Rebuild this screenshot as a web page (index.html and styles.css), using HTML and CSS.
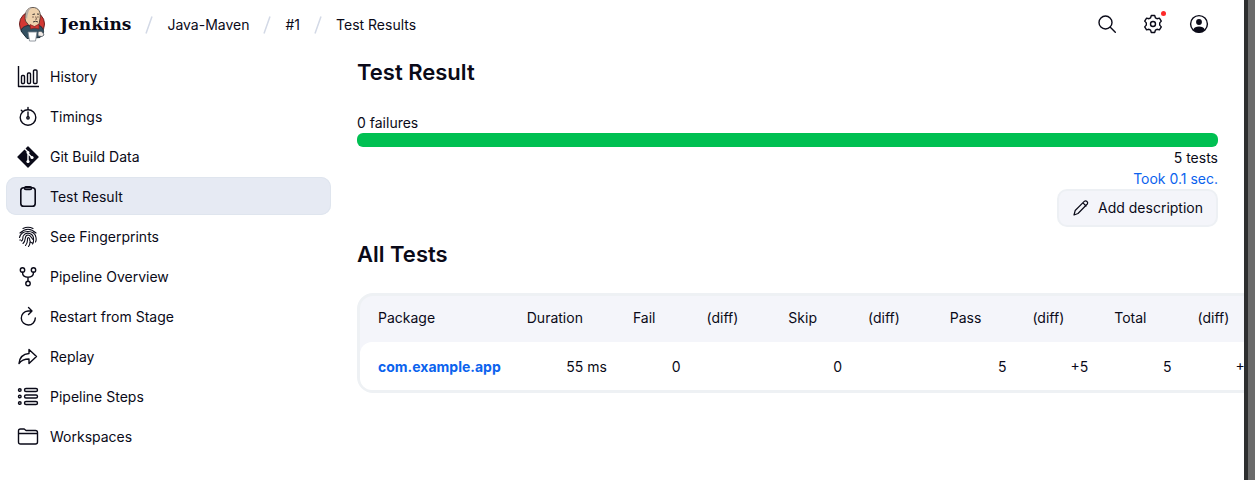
FILE: index.html
```html
<!DOCTYPE html>
<html lang="en">
<head>
<meta charset="utf-8">
<title>Test Results - Jenkins</title>
<link rel="stylesheet" href="styles.css">
</head>
<body>
<div class="page">
  <header class="header">
    <a class="brand" href="#">
      <svg class="brand-logo" viewBox="0 0 28 36" aria-hidden="true">
        <ellipse cx="14" cy="18" rx="12.500" ry="12.500" fill="#d33833" stroke="#6b2020" stroke-width="1"/>
        <path d="M7.500 15C6 8 8.500 2 14 1.500c7-.5 9 5 8 11l-1 6-4 3-6-2z" fill="#eed1ac" stroke="#3b3430" stroke-width=".8"/>
        <path d="M7.800 7C8.300 3.500 10.500 1.500 14 1.700l-3 2.500-1.500 5-.5 4-1-2z" fill="#b5aca4"/>
        <path d="M14.500 8.500l2.500-.5M19 8l2 .2M15 16q2.500-1.500 5 0" fill="none" stroke="#3b3430" stroke-width="1"/>
        <path d="M14 11h2M18.800 11h2M17.500 10.500l1.200 2.800h-1.500" stroke="#6a5145" stroke-width=".8" fill="none"/>
        <path d="M3 25c0-3 4-5 7-5.500l6 2 5-2c3 1 5 4 4.500 7l-3.500 5-13 1z" fill="#335061" stroke="#1b2c37" stroke-width="1"/>
        <path d="M12 18.500l4.500 2 4.500-2.500v5l-4.500-1-4 1z" fill="#d33833" stroke="#812020" stroke-width=".7"/>
        <path d="M10 26h9l-1.500 9h-6z" fill="#fff" stroke="#7a828a" stroke-width=".8"/>
        <path d="M20 26c2-1 4-1 5 1l1 2-2 1.500-4-.5z" fill="#f2ebe6" stroke="#45505a" stroke-width=".8"/>
      </svg>
      <span class="brand-name">Jenkins</span>
    </a>
    <nav class="crumbs" aria-label="Breadcrumb">
      <svg class="slash" viewBox="0 0 8 18" aria-hidden="true"><path d="M7 .5 1 17.500"/></svg>
      <a href="#">Java-Maven</a>
      <svg class="slash" viewBox="0 0 8 18" aria-hidden="true"><path d="M7 .5 1 17.500"/></svg>
      <a href="#">#1</a>
      <svg class="slash" viewBox="0 0 8 18" aria-hidden="true"><path d="M7 .5 1 17.500"/></svg>
      <a href="#">Test Results</a>
    </nav>
    <div class="actions">
      <button class="icon-button" type="button" aria-label="Search">
        <svg class="icon" viewBox="0 0 22 22"><circle cx="9.500" cy="9.500" r="6.500"/><path d="m14.300 14.300 5 5"/></svg>
      </button>
      <button class="icon-button" type="button" aria-label="Manage Jenkins">
        <svg class="icon" viewBox="0 0 22 22"><path d="M9.300 2.500h3.400l.7 2.300 1.600.9 2.400-.6 1.900 3-1.600 1.800v2.200l1.600 1.800-1.900 3-2.400-.6-1.600.9-.7 2.300H9.300l-.7-2.300-1.600-.9-2.400.6-1.900-3 1.600-1.800V9.900L2.700 8.100l1.900-3 2.400.6 1.600-.9z"/><circle cx="11" cy="11" r="2.500"/></svg>
        <span class="dot"></span>
      </button>
      <button class="icon-button" type="button" aria-label="User">
        <svg class="icon" viewBox="0 0 22 22"><circle cx="11" cy="11" r="8.400"/><circle class="solid" cx="11" cy="9" r="2.200"/><path class="solid" d="M6 16.500c1.500-3 8.500-3 10 0-3 3.300-7 3.300-10 0z"/></svg>
      </button>
    </div>
  </header>
  <div class="body">
    <nav class="tasks" aria-label="Tasks">
      <a class="task" href="#"><svg class="icon" viewBox="0 0 22 22"><path d="M1.500 0v20.500H22"/><rect x="4.500" y="9.500" width="3" height="8" rx="1"/><rect x="10.500" y="7" width="3" height="10.500" rx="1"/><rect x="16.500" y="4" width="3.500" height="13.500" rx="1"/></svg>History</a>
      <a class="task" href="#"><svg class="icon" viewBox="0 0 22 22"><circle cx="11" cy="11.500" r="7.800"/><path d="M11 1.500v2M4.300 4.300l1.500 1.500M11 6v5"/><circle cx="11" cy="11.800" r="1.200"/></svg>Timings</a>
      <a class="task" href="#"><svg class="icon" viewBox="0 0 22 22"><path class="solid" d="M11 1 21 11 11 21 1 11z"/><path class="knockout" d="M7.500 2.500 11 6v10M11 7.500l4 4"/><circle class="knockout-fill" cx="11" cy="6.500" r="1.500"/><circle class="knockout-fill" cx="11" cy="15.500" r="1.600"/><circle class="knockout-fill" cx="15" cy="11.500" r="1.600"/></svg>Git Build Data</a>
      <a class="task active" href="#" aria-current="page"><svg class="icon heavy" viewBox="0 0 22 22"><rect x="3.800" y="1.800" width="14.400" height="18.400" rx="2.800"/><rect x="7.500" y=".9" width="7" height="2.600" rx="1.300"/></svg>Test Result</a>
      <a class="task" href="#"><svg class="icon fine" viewBox="0 0 22 22"><path d="M6 2.500q5-2.500 10 0M3 7q8-7.500 16 0M2.500 11.500C4.500 3.500 17.500 3.500 19 11.500q.5 3-.5 4.500M4.500 15c2.500-1.500.5-3.500 2-5.500 3-4.500 10-2 10 3 0 2.500.5 3.500-1 5.500M6 17.500c4-3.500.5-8.500 5-8.500 3.500 0 3.500 4 5 4.500M8.500 19.500c3-3.500 1.500-5.500 2.200-7.500.8-1 2 0 2 1.500 0 3 1.300 3.500 3.300 3.500M11.500 20.500c1.500-2 1.500-3 1.300-4M2.800 14h1"/></svg>See Fingerprints</a>
      <a class="task" href="#"><svg class="icon" viewBox="0 0 22 22"><circle cx="5.500" cy="4" r="2.200"/><circle cx="16.500" cy="4" r="2.200"/><circle cx="11" cy="17.500" r="2.200"/><path d="M5.500 6.200c0 3 2 5 5.500 5s5.500-2 5.500-5M11 11.200v4"/></svg>Pipeline Overview</a>
      <a class="task" href="#"><svg class="icon" viewBox="0 0 22 22"><path d="M11.500 1.500 15 5l-3.500 3.500M15 5h-4a7 7 0 1 0 7.300 7"/></svg>Restart from Stage</a>
      <a class="task" href="#"><svg class="icon" viewBox="0 0 22 22"><path d="M12 3.500v4C5.500 8 2.500 12 2 17.500c2.500-3.500 5.500-4.500 10-4.500v4.500l7.500-7z"/></svg>Replay</a>
      <a class="task" href="#"><svg class="icon" viewBox="0 0 22 22"><circle cx="2.800" cy="4" r="1.300"/><circle cx="2.800" cy="10.500" r="1.300"/><circle cx="2.800" cy="17" r="1.300"/><rect x="7.500" y="2.500" width="13" height="3" rx="1.500"/><rect x="7.500" y="9" width="13" height="3" rx="1.500"/><rect x="7.500" y="15.500" width="13" height="3" rx="1.500"/></svg>Pipeline Steps</a>
      <a class="task" href="#"><svg class="icon" viewBox="0 0 22 22"><path d="M1.500 7.500V5q0-2 2-2h3.700L9 4.500h9.500q2 0 2 2v9.500q0 2-2 2h-15q-2 0-2-2zh19"/></svg>Workspaces</a>
    </nav>
    <main class="main">
      <h1 class="title">Test Result</h1>
      <div class="summary">
        <div>0 failures</div>
        <div class="bar"></div>
        <div class="right">5 tests</div>
        <div class="right"><a class="link" href="#">Took 0.1 sec.</a></div>
      </div>
      <button class="describe" type="button">
        <svg class="icon pencil" viewBox="0 0 18 18" aria-hidden="true"><path d="M2 16l1.200-4.500L12.500 2.200q1.200-1 2.500.3 1.300 1.300.3 2.500L6 14.500zM11 3.800 14 7"/></svg>
        Add description
      </button>
      <h2 class="title">All Tests</h2>
      <table class="results">
        <thead>
          <tr><th>Package</th><th>Duration</th><th>Fail</th><th>(diff)</th><th>Skip</th><th>(diff)</th><th>Pass</th><th>(diff)</th><th>Total</th><th>(diff)</th></tr>
        </thead>
        <tbody>
          <tr><td><a class="link strong" href="#">com.example.app</a></td><td>55 ms</td><td>0</td><td></td><td>0</td><td></td><td>5</td><td>+5</td><td>5</td><td>+5</td></tr>
        </tbody>
      </table>
    </main>
  </div>
</div>
<div class="window-edge"></div>
</body>
</html>
```
FILE: styles.css
```css
* { box-sizing: border-box; }

body {
  margin: 0;
  min-height: 100vh;
  display: grid;
  grid-template-columns: minmax(0, 1fr) 11px;
  background: #fff;
  color: #0a0a18;
  font: 14px/20px Inter, "Liberation Sans", sans-serif;
}

a { color: inherit; text-decoration: none; }
button { font: inherit; color: inherit; cursor: pointer; }

.page { overflow: hidden; }
.window-edge { background: #6b6b6b; border-left: 4px solid #2d2e2f; }

.icon {
  width: 22px;
  height: 22px;
  flex: none;
  fill: none;
  stroke: #0a0a18;
  stroke-width: 1.4;
  stroke-linecap: round;
  stroke-linejoin: round;
}
.icon.heavy { stroke-width: 1.6; }
.icon.fine { stroke-width: 1.1; }
.icon .solid { fill: #0a0a18; }
.icon .knockout { stroke: #fff; }
.icon .knockout-fill { fill: #fff; stroke: none; }

.header {
  display: flex;
  align-items: center;
  height: 48px;
  padding: 0 34px 0 18px;
}
.brand { display: flex; align-items: center; gap: 14px; }
.brand-logo { width: 28px; height: 36px; }
.brand-name { font: bold 17px/24px "DejaVu Serif", serif; }
.crumbs { display: flex; align-items: center; gap: 14px; margin-left: 14px; padding-top: 2px; }
.slash { width: 8px; height: 18px; fill: none; stroke: #d3d9e6; stroke-width: 1.5; }
.actions { display: flex; gap: 24px; margin-left: auto; }
.icon-button {
  position: relative;
  display: flex;
  padding: 0;
  border: 0;
  background: none;
}
.dot {
  position: absolute;
  top: -2px;
  right: -2px;
  width: 5px;
  height: 5px;
  border-radius: 50%;
  background: #fe2a2a;
}

.body { display: flex; }
.tasks {
  display: flex;
  flex: 0 0 325px;
  flex-direction: column;
  gap: 2px;
  margin-left: 6px;
  padding-top: 9px;
}
.task {
  display: flex;
  align-items: center;
  gap: 11px;
  height: 38px;
  padding: 2px 11px 0;
  border-radius: 10px;
}
.task.active { background: #e6eaf3; box-shadow: inset 0 0 0 1px #dfe5ee; }

.main {
  display: flex;
  flex: 1;
  flex-direction: column;
  min-width: 0;
  padding: 8px 26px 0;
}
.title { margin: 0; font-size: 22px; line-height: 32px; font-weight: 600; }
.summary { margin-top: 25px; }
.bar { height: 14px; border-radius: 6px; background: #00c052; }
.right { text-align: right; line-height: 21px; }
.link { color: #0b63ee; }
.link.strong { font-weight: 700; }
.describe {
  display: flex;
  align-items: center;
  align-self: flex-end;
  gap: 8px;
  height: 38px;
  margin-bottom: 11px;
  padding: 0 13px;
  border: 2px solid #edf0f4;
  border-radius: 10px;
  background: #f4f5fa;
}
.pencil { width: 18px; height: 18px; stroke-width: 1.2; }

.results {
  align-self: flex-start;
  margin-top: 23px;
  border: 3px solid #eef1f4;
  border-radius: 16px;
  border-spacing: 0;
  background: #f4f5fa;
  white-space: nowrap;
}
.results th { height: 46px; padding: 0 38px 2px 13px; font-weight: 400; text-align: left; }
.results th:nth-child(even) { padding-right: 37px; }
.results td { height: 48px; padding: 2px 13px 0; background: #fff; text-align: right; }
.results th:first-child,
.results td:first-child { padding-left: 18px; text-align: left; }
.results td:first-child { border-radius: 12px 0 0 12px; }
.results td:last-child { border-radius: 0 12px 12px 0; }
```
